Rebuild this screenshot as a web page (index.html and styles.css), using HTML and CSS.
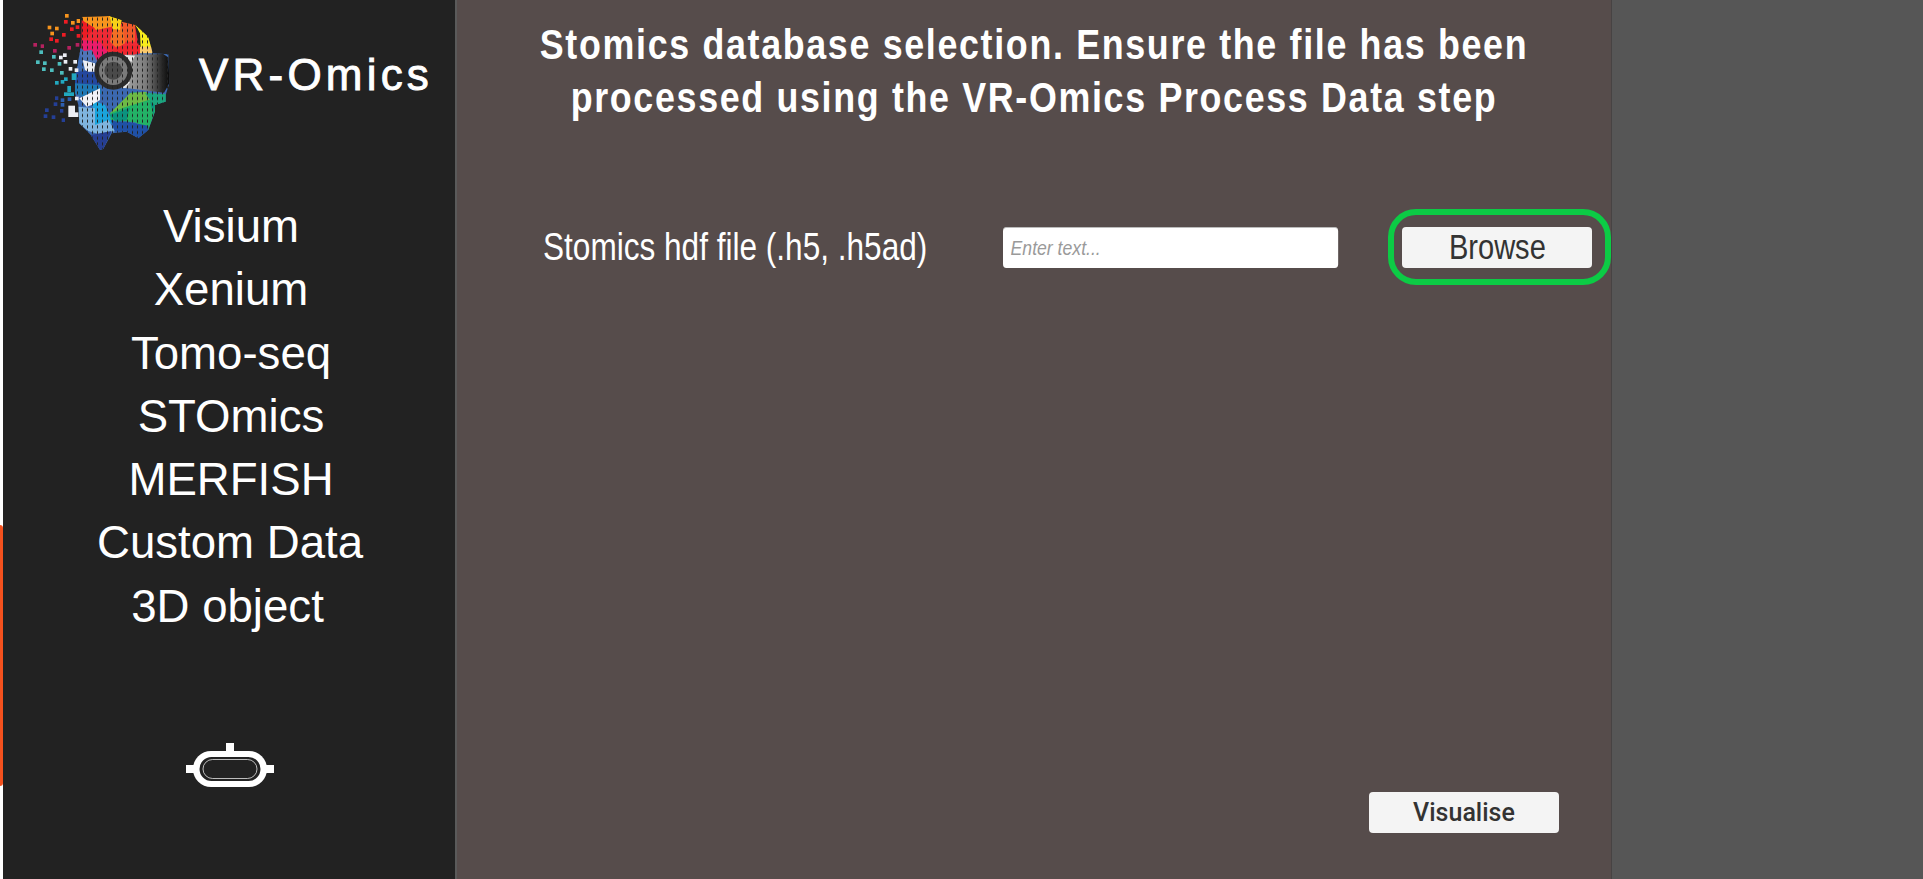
FILE: index.html
```html
<!DOCTYPE html>
<html lang="en">
<head>
    <meta charset="UTF-8">
    <title>VR-Omics</title>
    <link rel="stylesheet" href="styles.css">
</head>
<body>
    <div class="edge"><div class="edge-mark"></div></div>
    <aside class="sidebar">
        <div class="brand">
            <svg class="logo" viewBox="0 0 510 450" width="170" height="150">
                <defs>
                    <pattern id="cells" width="15" height="17" patternUnits="userSpaceOnUse">
                        <rect x="6" y="4" width="3" height="9" fill="#222"/>
                    </pattern>
                    <linearGradient id="visor" x1="0" x2="1" y1="0" y2="0">
                        <stop offset="0" stop-color="#b4b4b4"/>
                        <stop offset=".55" stop-color="#7c7c7c"/>
                        <stop offset=".85" stop-color="#2a2a2a"/>
                        <stop offset="1" stop-color="#0a0a0a"/>
                    </linearGradient>
                    <clipPath id="head">
                        <polygon points="185,35 270,33 345,58 385,95 398,145 445,148 448,235 437,270 437,290 405,300 405,320 385,375 355,400 320,380 275,385 250,432 240,435 212,390 178,355 175,300 165,265 165,215 180,140"/>
                    </clipPath>
                </defs>
                <g clip-path="url(#head)">
                    <rect x="160" y="130" width="290" height="310" fill="#3b68b0"/>
                    <polygon fill="#ee2a35" points="185,45 345,60 360,145 270,170 225,170 185,130"/>
                    <polygon fill="#f7941d" points="185,35 270,33 275,65 230,75 195,60"/>
                    <polygon fill="#f36f25" points="278,72 320,60 315,115 290,130 270,110"/>
                    <polygon fill="#f0592a" points="305,50 345,60 345,110 315,110"/>
                    <polygon fill="#f7d117" points="268,33 305,45 300,75 278,72"/>
                    <polygon fill="#f8ed1c" points="345,58 385,95 397,130 362,130 360,85"/>
                    <polygon fill="#fbc96a" points="360,125 397,125 398,145 360,145"/>
                    <polygon fill="#ed1c24" points="185,45 225,70 195,100 185,100"/>
                    <polygon fill="#ea1b6b" points="185,105 240,110 270,150 225,170 185,130"/>
                    <polygon fill="#f0262e" points="290,125 360,120 360,145 270,150"/>
                    <polygon fill="#4f75b8" points="175,140 215,135 235,175 190,165"/>
                    <polygon fill="#24479e" points="165,200 235,195 240,240 165,240"/>
                    <polygon fill="#eceef4" points="188,165 225,175 228,200 205,200 195,195"/>
                    <polygon fill="#1f78b4" points="165,235 240,240 245,265 205,285 165,265"/>
                    <polygon fill="#1aa4dc" points="215,285 255,300 280,355 225,365"/>
                    <polygon fill="#7fb4de" points="175,305 225,310 225,360 265,345 285,378 245,390 205,378 175,355"/>
                    <polygon fill="#f2f2f6" points="178,280 240,250 240,285 215,300 200,305"/>
                    <polygon fill="#23b266" points="270,325 335,262 437,268 437,290 405,300 405,320 385,375 345,352 272,345"/>
                    <polygon fill="#6db945" points="270,325 330,265 378,260 395,282 310,308"/>
                    <polygon fill="#1ba57d" points="375,265 437,268 437,290 405,300 390,285"/>
                    <polygon fill="#0b927f" points="268,330 330,308 320,345 290,352"/>
                    <polygon fill="#0b927f" points="390,288 405,300 400,330"/>
                    <polygon fill="#1f50a5" points="272,345 290,350 320,350 385,362 385,380 355,400 320,380 285,380"/>
                    <polygon fill="#263e92" points="212,390 275,378 250,432 240,435"/>
                    <polygon fill="url(#visor)" points="290,150 430,147 446,158 448,235 432,263 300,247"/>
                    <polygon fill="#e8e8e8" points="312,150 345,152 335,170 318,165"/>
                    <polygon fill="#e8e8e8" points="300,246 322,228 330,232 316,250"/>
                    <circle cx="280" cy="197" r="57" fill="#2b2b2b"/>
                    <circle cx="280" cy="197" r="43" fill="#7a7a7a"/>
                    <circle cx="280" cy="197" r="27" fill="#4a4a4a"/>
                    <rect width="510" height="450" fill="url(#cells)"/>
                </g>
                <g fill="#f7941d">
                    <rect x="135" y="27" width="11" height="11"/><rect x="83" y="62" width="11" height="11"/><rect x="105" y="65" width="11" height="11"/><rect x="153" y="48" width="11" height="11"/><rect x="91" y="80" width="11" height="11"/><rect x="170" y="42" width="10" height="12"/>
                </g>
                <g fill="#ed1c24">
                    <rect x="132" y="45" width="11" height="11"/><rect x="150" y="67" width="11" height="11"/><rect x="167" y="61" width="11" height="11"/><rect x="126" y="84" width="11" height="11"/><rect x="88" y="97" width="11" height="11"/><rect x="105" y="102" width="11" height="11"/><rect x="170" y="87" width="11" height="11"/>
                </g>
                <g fill="#b5215f">
                    <rect x="40" y="114" width="11" height="11"/><rect x="62" y="118" width="10" height="11"/><rect x="99" y="132" width="11" height="11"/><rect x="142" y="123" width="11" height="11"/><rect x="167" y="114" width="11" height="11"/>
                </g>
                <g fill="#4dbdbd">
                    <rect x="58" y="136" width="11" height="11"/><rect x="48" y="166" width="11" height="11"/><rect x="69" y="169" width="11" height="11"/><rect x="66" y="187" width="11" height="11"/><rect x="90" y="190" width="11" height="11"/><rect x="96" y="150" width="11" height="11"/><rect x="113" y="171" width="11" height="11"/><rect x="120" y="198" width="11" height="11"/>
                </g>
                <g fill="#eceef4">
                    <rect x="117" y="152" width="11" height="11"/><rect x="129" y="145" width="11" height="11"/><rect x="131" y="165" width="11" height="11"/><rect x="160" y="165" width="11" height="11"/><rect x="146" y="186" width="11" height="11"/><rect x="164" y="190" width="11" height="11"/><rect x="165" y="275" width="11" height="11"/><rect x="145" y="302" width="20" height="34"/><rect x="165" y="322" width="10" height="14"/>
                </g>
                <g fill="#22a8bf">
                    <rect x="105" y="228" width="11" height="11"/><rect x="122" y="225" width="11" height="11"/><rect x="132" y="217" width="11" height="11"/><rect x="155" y="205" width="14" height="20"/><rect x="142" y="243" width="11" height="18"/><rect x="132" y="262" width="30" height="11"/>
                </g>
                <g fill="#2d5fb0">
                    <rect x="122" y="280" width="11" height="11"/><rect x="143" y="277" width="11" height="11"/><rect x="122" y="294" width="11" height="11"/>
                </g>
                <g fill="#243f96">
                    <rect x="105" y="274" width="10" height="11"/><rect x="101" y="292" width="11" height="11"/><rect x="120" y="312" width="10" height="11"/><rect x="75" y="310" width="11" height="11"/><rect x="71" y="328" width="11" height="11"/><rect x="95" y="331" width="11" height="11"/><rect x="125" y="340" width="10" height="11"/>
                </g>
            </svg>
            <span class="brand-name">VR-Omics</span>
        </div>
        <nav class="menu">
            <a>Visium</a>
            <a>Xenium</a>
            <a>Tomo-seq</a>
            <a>STOmics</a>
            <a>MERFISH</a>
            <a class="menu-custom">Custom Data</a>
            <a class="menu-object">3D object</a>
        </nav>
        <svg class="headset" viewBox="0 0 88 44" width="88" height="44">
            <rect x="40" y="0" width="8" height="10" fill="#fff"/>
            <rect x="0" y="22" width="88" height="8" fill="#fff"/>
            <rect x="7" y="8" width="74" height="36" rx="18" fill="#fff"/>
            <rect x="14.500" y="15" width="59" height="22" rx="11" fill="#222" stroke="#222" stroke-width="2"/>
            <rect x="17" y="16.500" width="54" height="19" rx="9.500" fill="#222" stroke="#fff" stroke-width=".7"/>
        </svg>
    </aside>
    <main class="panel">
        <h1 class="title">Stomics database selection. Ensure the file has been<br>processed using the VR-Omics Process Data step</h1>
        <div class="file-row">
            <label class="file-label" for="hdf">Stomics hdf file (.h5, .h5ad)</label>
            <input class="file-input" id="hdf" type="text" placeholder="Enter text...">
            <div class="browse-ring"><button class="browse" type="button"><span class="browse-text">Browse</span></button></div>
        </div>
        <div class="actions">
            <button class="visualise" type="button">Visualise</button>
        </div>
    </main>
    <div class="blank"></div>
</body>
</html>
```

FILE: styles.css
```css
html, body {
    height: 100%;
}
body {
    margin: 0;
    display: flex;
    overflow: hidden;
    background: #565656;
    font-family: "Liberation Sans", Arial, sans-serif;
}
.edge {
    width: 3px;
    background: #fff;
    padding-top: 525px;
    flex: none;
}
.edge-mark {
    height: 261px;
    background: #f4511e;
    border-radius: 0 3px 3px 0;
}
.sidebar {
    width: 454px;
    flex: none;
    box-sizing: border-box;
    background: #222222;
    border-right: 2px solid #5a5a5a;
    display: flex;
    flex-direction: column;
    align-items: center;
}
.brand {
    align-self: stretch;
    display: flex;
    align-items: center;
    height: 150px;
}
.logo {
    margin-left: 17px;
    margin-top: 10px;
    flex: none;
}
.brand-name {
    margin-left: 9px;
    color: #fff;
    font-size: 44px;
    letter-spacing: 4.200px;
    line-height: 1;
    -webkit-text-stroke: .9px #fff;
}
.menu {
    margin-top: 45px;
    padding-left: 4px;
    display: flex;
    flex-direction: column;
    align-items: center;
    color: #fff;
    font-size: 45.600px;
    line-height: 63.300px;
}
.menu-custom {
    margin-right: 2px;
}
.menu-object {
    margin-right: 7px;
}
.headset {
    margin-top: 105px;
    margin-left: 2px;
}
.panel {
    width: 1155px;
    flex: none;
    box-sizing: border-box;
    background: #564c4b;
    border-right: 1px solid #474343;
    display: flex;
    flex-direction: column;
    color: #fff;
}
/* the reference text is squeezed sideways, so the wide runs get a scaleX */
.title {
    margin: 18px -50px 0;
    text-align: center;
    white-space: nowrap;
    font-size: 43px;
    line-height: 53px;
    font-weight: 700;
    letter-spacing: 2px;
    transform: scaleX(.833);
}
.file-row {
    margin-top: 85px;
    display: flex;
    align-items: center;
    padding-left: 86px;
}
.file-label {
    width: 460px;
    flex: none;
    white-space: nowrap;
    font-size: 38.500px;
    line-height: 40px;
    transform: scaleX(.82);
    transform-origin: left center;
}
.file-input {
    width: 399px;
    height: 41px;
    margin-right: -64px;
    flex: none;
    box-sizing: border-box;
    border: 0;
    border-top: 1px solid #bbb;
    border-radius: 4px;
    padding: 0 9px;
    background: #fff;
    font-family: inherit;
    font-size: 21px;
    font-style: italic;
    transform: scaleX(.84);
    transform-origin: left center;
}
.file-input::placeholder {
    color: #9a9a9a;
}
.browse-ring {
    margin-left: 50px;
    box-sizing: border-box;
    width: 223px;
    height: 76px;
    padding-left: 8px;
    border: 6px solid #0ccb45;
    border-radius: 28px;
    display: flex;
    align-items: center;
}
.browse {
    width: 190px;
    height: 41px;
    border: 0;
    border-radius: 4px;
    background: #f4f4f4;
    color: #333;
    font-family: inherit;
    font-size: 35px;
    padding: 0;
}
.browse-text {
    display: inline-block;
    transform: scaleX(.83);
}
.actions {
    margin-top: auto;
    margin-bottom: 46px;
    padding-right: 52px;
    display: flex;
    justify-content: flex-end;
}
.visualise {
    width: 190px;
    height: 41px;
    border: 0;
    border-radius: 4px;
    background: #f4f4f4;
    color: #333;
    font-family: Roboto, sans-serif;
    font-weight: 500;
    font-size: 25px;
    padding: 0;
}
.blank {
    flex: 1;
}
```
